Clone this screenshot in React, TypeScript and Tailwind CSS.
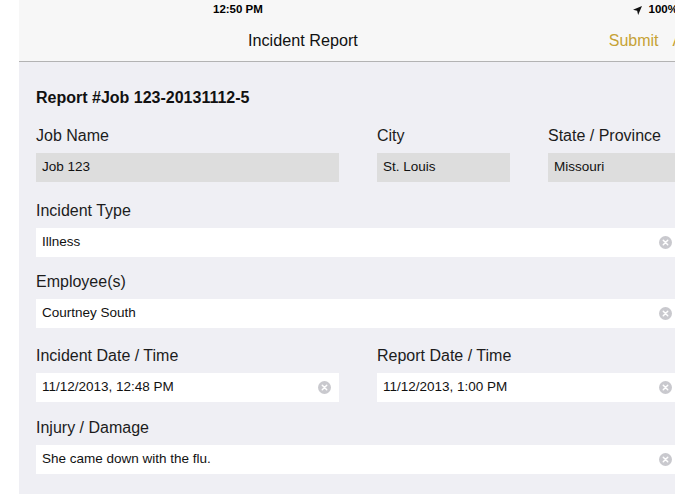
import React from 'react';

const font = { fontFamily: '"Liberation Sans", Arial, sans-serif' };

function ClearButton() {
  return (
    <svg width="13" height="13" viewBox="0 0 14 14" className="shrink-0">
      <circle cx="7" cy="7" r="7" fill="#c9c9ce" />
      <path d="M4.6 4.6 L9.4 9.4 M9.4 4.6 L4.6 9.4" stroke="#ffffff" strokeWidth="1.6" strokeLinecap="round" />
    </svg>
  );
}

function Field({
  label,
  value,
  readOnly = false,
  clear = false,
  narrow = false,
  className = '',
}: {
  label: string;
  value: string;
  readOnly?: boolean;
  clear?: boolean;
  narrow?: boolean;
  className?: string;
}) {
  return (
    <div className={`flex flex-col ${className}`}>
      <div className="h-[20px] leading-[20px] text-[16px] text-[#1c1c1c] whitespace-nowrap">{label}</div>
      <div
        className={`mt-[7px] h-[29px] flex items-center pl-[6px] ${narrow ? 'pr-[8px]' : 'pr-[3px]'} ${
          readOnly ? 'bg-[#dddddd]' : 'bg-white'
        }`}
      >
        <span className="flex-1 text-[13.5px] text-[#111] whitespace-nowrap">{value}</span>
        {clear && <ClearButton />}
      </div>
    </div>
  );
}

export default function App() {
  return (
    <div className="w-[695px] h-[494px] bg-white overflow-hidden" style={font}>
      <div className="ml-[19px] w-[656px] h-[494px] overflow-hidden bg-[#efeff4] flex flex-col">
        {/* status bar + nav */}
        <div className="bg-[#f7f7f7] border-b border-[#b3b3b3]">
          <div className="h-[20px] flex items-center whitespace-nowrap">
            <span className="ml-[194px] text-[11.5px] font-bold text-black">12:50 PM</span>
            <div className="ml-auto mr-[-3px] flex items-center gap-[7px]">
              <svg width="9" height="9" viewBox="0 0 10 10">
                <path d="M10 0 L0 4.3 L4.6 5.4 L5.7 10 Z" fill="#111" />
              </svg>
              <span className="text-[11.5px] font-bold text-black">100%</span>
            </div>
          </div>
          <div className="h-[41px] flex items-center whitespace-nowrap">
            <span className="ml-[229px] text-[16.2px] text-[#111]">Incident Report</span>
            <span className="ml-auto text-[16px] text-[#c6a235]">Submit</span>
            <span className="ml-[14px] mr-[-26px] text-[16px] text-[#c6a235]">Add</span>
          </div>
        </div>

        {/* form */}
        <div className="pl-[17px] pt-[26px] flex flex-col">
          <div className="h-[20px] leading-[20px] text-[16px] font-bold text-[#111]">Report #Job 123-20131112-5</div>

          <div className="mt-[18px] flex gap-[38px]">
            <Field label="Job Name" value="Job 123" readOnly className="w-[303px]" />
            <Field label="City" value="St. Louis" readOnly className="w-[133px]" />
            <Field label="State / Province" value="Missouri" readOnly className="flex-1" />
          </div>

          <Field label="Incident Type" value="Illness" clear className="mt-[19px]" />
          <Field label="Employee(s)" value="Courtney South" clear className="mt-[15px]" />

          <div className="mt-[18px] flex gap-[38px]">
            <Field label="Incident Date / Time" value="11/12/2013, 12:48 PM" clear narrow className="w-[303px]" />
            <Field label="Report Date / Time" value="11/12/2013, 1:00 PM" clear className="flex-1" />
          </div>

          <Field label="Injury / Damage" value="She came down with the flu." clear className="mt-[16px]" />
        </div>
      </div>
    </div>
  );
}
